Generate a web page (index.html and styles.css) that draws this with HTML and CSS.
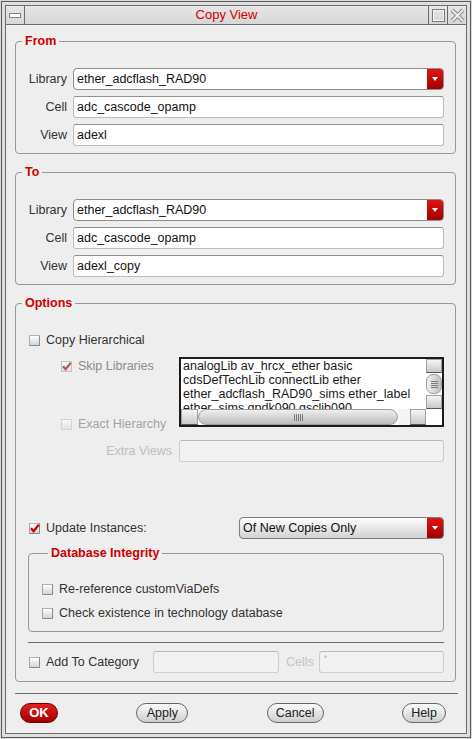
FILE: index.html
```html
<!DOCTYPE html>
<html>
<head>
<meta charset="utf-8">
<title>Copy View</title>
<link rel="stylesheet" href="styles.css">
</head>
<body>
<div class="window">
  <div class="frame">
    <div class="titlebar">
      <div class="tb-btn left">
        <svg width="12" height="5" viewBox="0 0 12 5"><rect x="0.5" y="0.5" width="11" height="4" fill="#ffffff" stroke="#858585"/></svg>
      </div>
      <div class="tb-title">Copy View</div>
      <div class="tb-btn max">
        <svg width="13" height="13" viewBox="0 0 13 13"><rect x="0.5" y="0.5" width="12" height="12" fill="none" stroke="#7c7c7c"/><rect x="1.5" y="1.5" width="10" height="10" fill="none" stroke="#f6f6f6"/></svg>
      </div>
      <div class="tb-btn close">
        <svg width="15" height="15" viewBox="0 0 15 15"><path d="M2 2 L13 13 M13 2 L2 13" stroke="#8a8a8a" stroke-width="4" fill="none"/><path d="M2 2 L13 13 M13 2 L2 13" stroke="#ececec" stroke-width="2" fill="none"/></svg>
      </div>
    </div>

    <div class="main">
      <fieldset class="group">
        <legend>From</legend>
        <div class="form-grid">
          <span class="lbl">Library</span>
          <div class="combo"><span class="combo-text">ether_adcflash_RAD90</span><span class="combo-arrow"></span></div>
          <span class="lbl">Cell</span>
          <div class="field">adc_cascode_opamp</div>
          <span class="lbl">View</span>
          <div class="field">adexl</div>
        </div>
      </fieldset>

      <fieldset class="group">
        <legend>To</legend>
        <div class="form-grid">
          <span class="lbl">Library</span>
          <div class="combo"><span class="combo-text">ether_adcflash_RAD90</span><span class="combo-arrow"></span></div>
          <span class="lbl">Cell</span>
          <div class="field">adc_cascode_opamp</div>
          <span class="lbl">View</span>
          <div class="field">adexl_copy</div>
        </div>
      </fieldset>

      <fieldset class="group options">
        <legend>Options</legend>
        <div class="check-row copy"><span class="cb"></span>Copy Hierarchical</div>

        <div class="sub-row">
          <div class="sub-left">
            <div class="check-row skip"><span class="cb dim"><svg width="11" height="11" viewBox="0 0 11 11"><path d="M2 5.2 L4.6 8.2 L9.8 1.8" stroke="#b25a5a" stroke-width="2.2" fill="none"/></svg></span>Skip Libraries</div>
            <div class="check-row exact"><span class="cb off"></span>Exact Hierarchy</div>
          </div>
          <div class="listbox">
            <div class="lb-text">analogLib av_hrcx_ether basic<br>cdsDefTechLib connectLib ether<br>ether_adcflash_RAD90_sims ether_label<br>ether_sims gpdk090 gsclib090</div>
            <div class="vscroll">
              <div class="sb-btn v"></div>
              <div class="thumb-v"><span class="grip-v"></span></div>
              <div class="sb-btn v"></div>
            </div>
            <div class="hscroll">
              <div class="sb-btn h left"></div>
              <div class="thumb-h"><span class="grip-h"></span></div>
              <div class="track"></div>
              <div class="sb-btn h"></div>
            </div>
            <div class="corner"></div>
          </div>
        </div>

        <div class="extra-row">
          <span class="extra-lbl">Extra Views</span>
          <div class="field disabled grow"></div>
        </div>

        <div class="update-row">
          <div class="update-left"><span class="cb"><svg width="11" height="11" viewBox="0 0 11 11"><path d="M2 5.2 L4.6 8.2 L9.8 1.8" stroke="#cc0000" stroke-width="2.2" fill="none"/></svg></span>Update Instances:</div>
          <div class="combo grad grow"><span class="combo-text">Of New Copies Only</span><span class="combo-arrow"></span></div>
        </div>

        <fieldset class="group db">
          <legend>Database Integrity</legend>
          <div class="check-row db-row"><span class="cb"></span>Re-reference customViaDefs</div>
          <div class="check-row db-row second"><span class="cb"></span>Check existence in technology database</div>
        </fieldset>

        <div class="sep inner"></div>

        <div class="add-row">
          <div class="add-left"><span class="cb"></span>Add To Category</div>
          <div class="field disabled cat"></div>
          <span class="cells">Cells</span>
          <div class="field disabled grow star">*</div>
        </div>
      </fieldset>

      <div class="sep outer"></div>

      <div class="buttons">
        <div class="btn ok">OK</div>
        <div class="btn apply">Apply</div>
        <div class="btn cancel">Cancel</div>
        <div class="btn help">Help</div>
      </div>
    </div>
  </div>
</div>
</body>
</html>
```

FILE: styles.css
```css
* { box-sizing: border-box; }

html, body {
  margin: 0;
  padding: 0;
}

body {
  width: 472px;
  height: 739px;
  overflow: hidden;
  background: #d6d6d6;
  font-family: "Liberation Sans", Arial, sans-serif;
  font-size: 12.5px;
  color: #333333;
}

.window {
  width: 472px;
  height: 739px;
  padding: 1px;
  background: #d8d8d8;
}

.frame {
  height: 737px;
  border: 1px solid #5c5c5c;
  padding: 3px;
  background: #dedede;
  display: flex;
  flex-direction: column;
}

/* ---------- title bar ---------- */
.titlebar {
  flex: none;
  height: 20px;
  display: flex;
  border: 1px solid #6e6e6e;
  background: linear-gradient(#e6e6e6, #d6d6d6);
}

.tb-btn {
  width: 19px;
  display: flex;
  align-items: center;
  justify-content: center;
}

.tb-btn.left,
.tb-btn.max {
  border-right: 1px solid #6e6e6e;
}

.tb-btn.close {
  width: 18px;
}

.tb-title {
  flex: 1;
  border-right: 1px solid #6e6e6e;
  text-align: center;
  line-height: 18px;
  font-size: 13px;
  color: #d00000;
}

/* ---------- main body ---------- */
.main {
  flex: 1;
  border: 1px solid #6e6e6e;
  border-top: none;
  background: #eeeeee;
  padding: 9px 10px 0 9px;
  display: flex;
  flex-direction: column;
}

.group {
  margin: 0;
  min-width: 0;
  padding: 20px 11px 7px 0;
  border: 1px solid #989898;
  border-radius: 4px;
}

.group + .group {
  margin-top: 11px;
}

.group legend {
  margin-left: 6px;
  padding: 0 3px;
  font-weight: bold;
  font-size: 12.5px;
  line-height: 14px;
  color: #cc0000;
}

.form-grid {
  display: grid;
  grid-template-columns: 51px 1fr;
  column-gap: 6px;
  row-gap: 6px;
  align-items: center;
}

.lbl {
  text-align: right;
  color: #333333;
}

.field {
  height: 22px;
  background: #ffffff;
  border: 1px solid #bcbcbc;
  border-top-color: #8e8e8e;
  border-radius: 3px;
  padding-left: 3px;
  line-height: 20px;
  color: #111111;
  white-space: nowrap;
  overflow: hidden;
}

.field.disabled {
  background: #f1f1f1;
  border-color: #cdcdcd;
  border-top-color: #b9b9b9;
}

.grow {
  flex: 1;
}

.combo {
  height: 22px;
  display: flex;
  border: 1px solid #8c8c8c;
  border-radius: 4px;
  background: #ffffff;
  overflow: hidden;
}

.combo.grad {
  background: linear-gradient(#fdfdfd, #d2d2d2);
  border-color: #7c7c7c;
}

.combo-text {
  flex: 1;
  padding-left: 3px;
  line-height: 20px;
  color: #111111;
  white-space: nowrap;
}

.combo-arrow {
  width: 16px;
  background: linear-gradient(#e21212, #a20000);
  display: flex;
  align-items: center;
  justify-content: center;
}

.combo-arrow::after {
  content: "";
  border-left: 3px solid transparent;
  border-right: 3px solid transparent;
  border-top: 4px solid #ffffff;
}

/* ---------- checkboxes ---------- */
.check-row {
  display: flex;
  align-items: center;
  height: 16px;
  white-space: nowrap;
}

.cb {
  flex: none;
  width: 11px;
  height: 11px;
  margin-right: 6px;
  border: 1px solid #8a8a8a;
  border-top-color: #b4b4b4;
  border-left-color: #a8a8a8;
  background: linear-gradient(#ffffff, #d4d4d4);
  position: relative;
}

.cb svg {
  position: absolute;
  left: -1px;
  top: -1px;
}

.cb.dim {
  border-color: #c2c2c2;
  background: linear-gradient(#fafafa, #e0e0e0);
}

.cb.off {
  border-color: #d2d2d2;
  background: linear-gradient(#f8f8f8, #e2e2e2);
}

/* ---------- options ---------- */
.options {
  padding: 22px 11px 8px 0;
}

.copy {
  padding-left: 13px;
  color: #333333;
}

.sub-row {
  display: flex;
  margin-top: 9px;
}

.sub-left {
  flex: none;
  width: 163px;
  display: flex;
  flex-direction: column;
}

.skip {
  height: 18px;
  padding-left: 45px;
  color: #8c8c8c;
}

.exact {
  margin-top: 41px;
  padding-left: 45px;
  color: #a4a4a4;
}

.listbox {
  flex: 1;
  height: 70px;
  border: 2px solid #1c1c1c;
  background: #ffffff;
  display: grid;
  grid-template-columns: 1fr 16px;
  grid-template-rows: 1fr 16px;
  overflow: hidden;
}

.lb-text {
  padding-left: 2px;
  line-height: 14px;
  color: #1a1a1a;
  white-space: nowrap;
  overflow: hidden;
}

.vscroll {
  display: flex;
  flex-direction: column;
}

.sb-btn {
  background: linear-gradient(#f6f6f6, #c8c8c8);
  border: 1px solid #a0a0a0;
}

.sb-btn.v {
  height: 14px;
  border-bottom-color: #555555;
}

.thumb-v {
  flex: 1;
  margin: 1px 0;
  border: 1px solid #9c9c9c;
  border-radius: 7px;
  background: linear-gradient(90deg, #f0f0f0, #bebebe);
  display: flex;
  align-items: center;
  justify-content: center;
}

.grip-v {
  width: 7px;
  height: 7px;
  background: repeating-linear-gradient(#7a7a7a 0 1px, transparent 1px 2px);
}

.hscroll {
  display: flex;
}

.sb-btn.h {
  width: 16px;
  border-bottom-color: #555555;
}

.sb-btn.h.left {
  width: 17px;
}

.thumb-h {
  width: 200px;
  border: 1px solid #9c9c9c;
  border-radius: 8px;
  background: linear-gradient(#efefef, #bcbcbc);
  display: flex;
  align-items: center;
  justify-content: center;
}

.grip-h {
  width: 9px;
  height: 7px;
  background: repeating-linear-gradient(90deg, #7a7a7a 0 1px, transparent 1px 2px);
}

.track {
  flex: 1;
  background: #f4f4f4;
}

.corner {
  background: #ffffff;
}

.extra-row {
  display: flex;
  align-items: center;
  height: 22px;
  margin-top: 8px;
}

.extra-lbl {
  flex: none;
  width: 163px;
  padding-right: 7px;
  text-align: right;
  color: #c0c0c0;
}

.update-row {
  display: flex;
  align-items: center;
  height: 22px;
  margin-top: 55px;
}

.update-left {
  flex: none;
  width: 223px;
  padding-left: 13px;
  display: flex;
  align-items: center;
  color: #333333;
}

.db {
  margin: 7px 0 0 12px;
  padding: 21px 0 10px 13px;
}

.db-row.second {
  margin-top: 8px;
}

.sep {
  height: 1px;
  background: #6c6c6c;
}

.sep.inner {
  margin: 10px 0 0 12px;
}

.add-row {
  display: flex;
  align-items: center;
  height: 22px;
  margin-top: 8px;
}

.add-left {
  flex: none;
  width: 137px;
  padding-left: 13px;
  display: flex;
  align-items: center;
  white-space: nowrap;
}

.field.cat {
  flex: none;
  width: 126px;
}

.cells {
  margin: 0 5px 0 7px;
  color: #c4c4c4;
}

.field.star {
  font-size: 9px;
  line-height: 12px;
  color: #b8b8b8;
  padding-left: 4px;
}

.sep.outer {
  margin: 11px -2px 0 0;
}

/* ---------- buttons ---------- */
.buttons {
  margin-top: 9px;
  padding: 0 10px 0 5px;
  display: flex;
  justify-content: space-between;
}

.btn {
  height: 20px;
  border: 1px solid #676767;
  border-radius: 10px;
  background: linear-gradient(#fcfcfc, #cdcdcd);
  text-align: center;
  line-height: 18px;
  color: #222222;
}

.btn.ok {
  width: 38px;
  background: linear-gradient(#e42020, #a20000);
  border-color: #6a0000;
  color: #ffffff;
  font-weight: bold;
  font-size: 13px;
}

.btn.apply { width: 52px; }
.btn.cancel { width: 57px; }
.btn.help { width: 44px; }
```
